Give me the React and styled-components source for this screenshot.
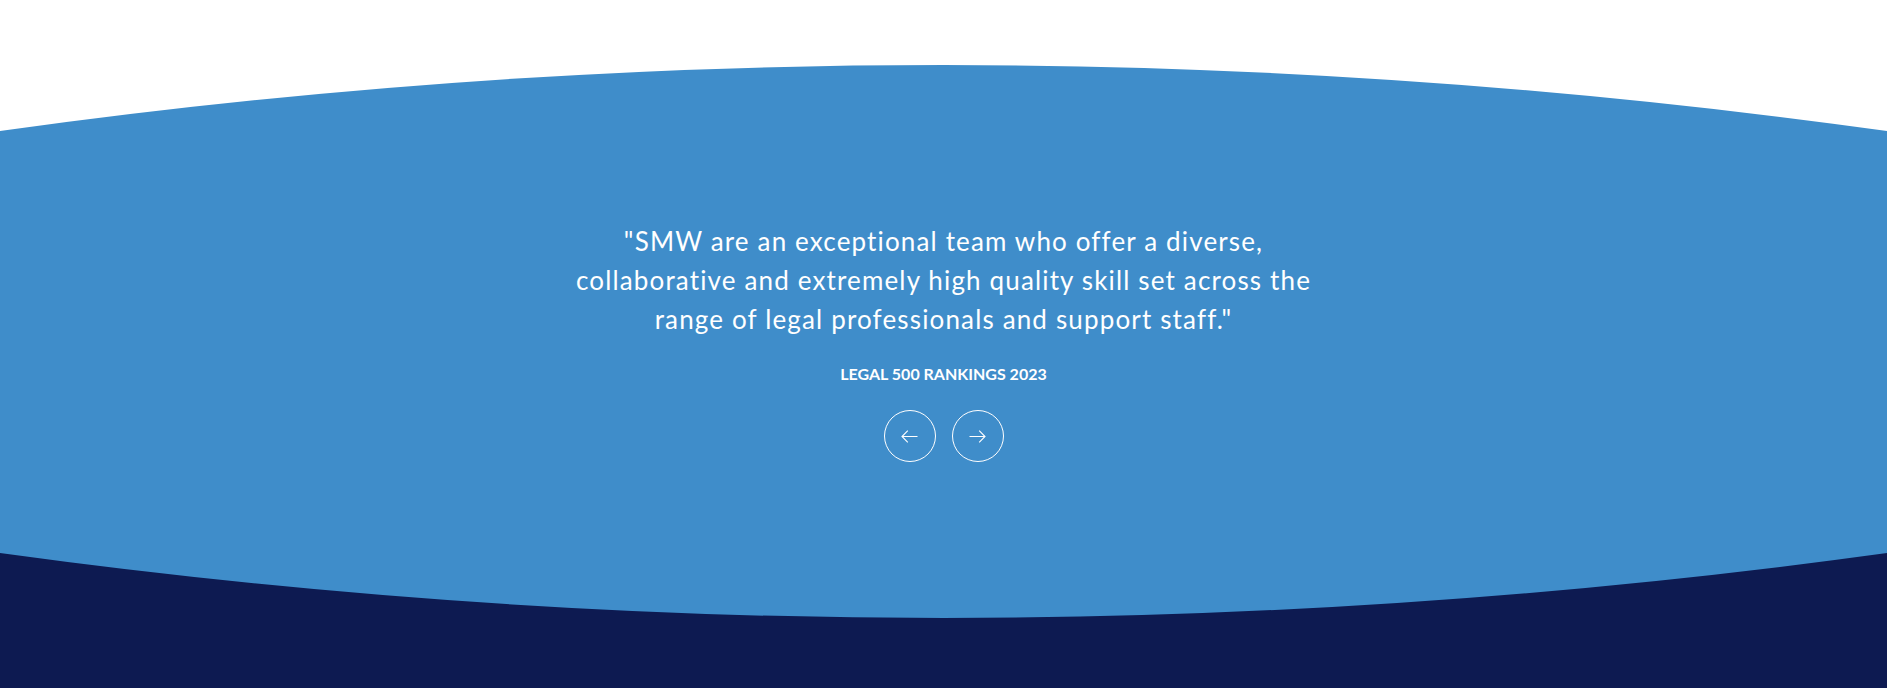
import React from "react";
import styled, { createGlobalStyle } from "styled-components";

const Global = createGlobalStyle`
  html, body { margin: 0; padding: 0; background: #ffffff; }
  body { font-family: Lato, "Open Sans", sans-serif; overflow: hidden; }
`;

const BLUE = "#3f8dca";
const NAVY = "#0d1a51";

const Page = styled.div`
  width: calc(100% - 3px);
  padding-top: 65px;
  display: flex;
  flex-direction: column;
`;

const Wave = styled.svg`
  display: block;
  width: 100%;
  height: ${(p) => p.$h}px;
  background: ${(p) => p.$bg || "transparent"};
`;

const Band = styled.section`
  background: ${BLUE};
  height: 422px;
  display: flex;
  align-items: center;
  justify-content: center;
`;

const Testimonial = styled.div`
  width: 770px;
  display: flex;
  flex-direction: column;
  align-items: center;
  text-align: center;
  color: #ffffff;
`;

const Quote = styled.blockquote`
  margin: 0;
  font-family: Lato, "Open Sans", sans-serif;
  font-size: 26px;
  line-height: 39px;
  font-weight: 400;
  letter-spacing: 1.15px;
`;

const Source = styled.p`
  margin: 23px 0 0;
  font-family: Lato, "Open Sans", sans-serif;
  font-size: 16px;
  line-height: 24px;
  font-weight: 700;
  text-transform: uppercase;
`;

const Controls = styled.div`
  margin-top: 24px;
  display: flex;
  gap: 16px;
`;

const RoundButton = styled.button`
  width: 52px;
  height: 52px;
  border-radius: 50%;
  border: 1px solid #ffffff;
  background: transparent;
  color: #ffffff;
  padding: 0;
  display: flex;
  align-items: center;
  justify-content: center;
  cursor: pointer;
`;

const Footer = styled.div`
  background: ${NAVY};
  height: 70px;
`;

const Arrow = ({ dir }) => (
  <svg width="17" height="13" viewBox="0 0 17 13" fill="none" stroke="#fff" strokeWidth="1.1">
    {dir === "left" ? (
      <path d="M16.5 6.5H1M6.8 0.7L1 6.5l5.8 5.8" />
    ) : (
      <path d="M0.5 6.5H16M10.2 0.7L16 6.5l-5.8 5.8" />
    )}
  </svg>
);

export default function App() {
  return (
    <>
      <Global />
      <Page>
        <Wave $h={66} viewBox="0 0 1887 66" preserveAspectRatio="none">
          <path d="M0 66 Q943.5 -66 1887 66 Z" fill={BLUE} />
        </Wave>
        <Band>
          <Testimonial>
            <Quote>
              "SMW are an exceptional team who offer a diverse, collaborative and extremely high quality skill set across the range of legal professionals and support staff."
            </Quote>
            <Source>Legal 500 Rankings 2023</Source>
            <Controls>
              <RoundButton aria-label="Previous">
                <Arrow dir="left" />
              </RoundButton>
              <RoundButton aria-label="Next">
                <Arrow dir="right" />
              </RoundButton>
            </Controls>
          </Testimonial>
        </Band>
        <Wave $h={65} $bg={BLUE} viewBox="0 0 1887 65" preserveAspectRatio="none">
          <path d="M0 0 Q943.5 130 1887 0 L1887 65 L0 65 Z" fill={NAVY} />
        </Wave>
        <Footer />
      </Page>
    </>
  );
}
